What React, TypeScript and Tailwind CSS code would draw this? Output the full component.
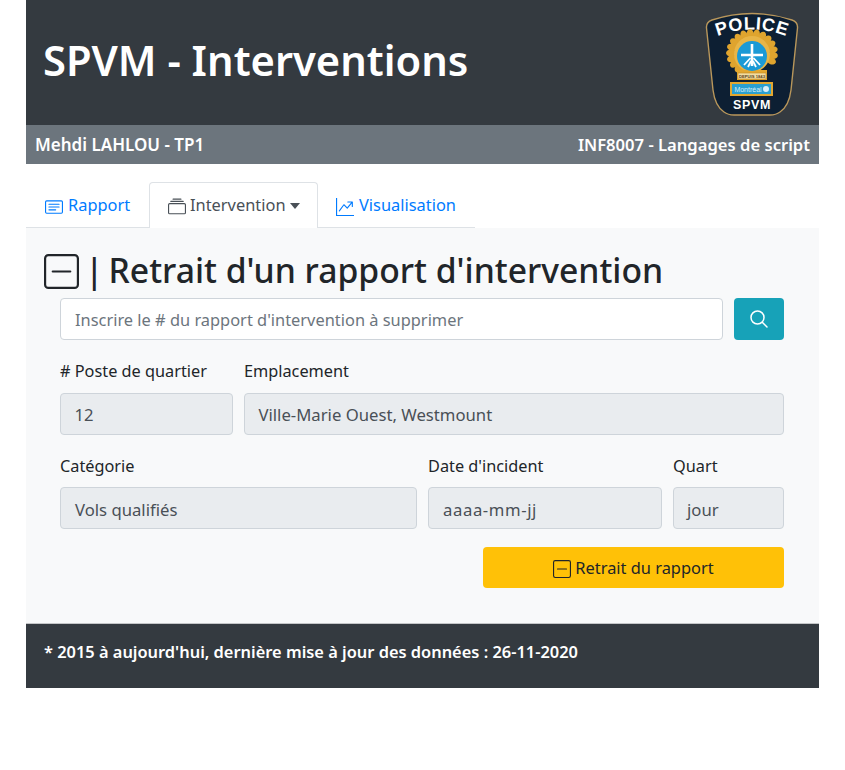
const font = { fontFamily: '"Noto Sans", sans-serif' };
const labelFont = "Liberation Sans, sans-serif";

function Badge() {
  const leaves = Array.from({ length: 17 }, (_, i) => {
    const d = i * 17 + 112;
    const a = (d * Math.PI) / 180;
    return { x: 48 + 21 * Math.cos(a), y: 43 + 19 * Math.sin(a), r: d };
  });
  return (
    <svg width="96" height="106" viewBox="0 0 96 106" className="block">
      <path d="M8 10 Q48 -3 88 10 Q94 12 93.5 18 L87 80 Q85 96 76 102 Q72 105 66 105 L30 105 Q24 105 20 102 Q11 96 9 80 L2.5 18 Q2 12 8 10 Z" fill="#0d1f33" stroke="#b9975b" strokeWidth="1.4" />
      <path id="policeArc" d="M9 28 Q48 11 87 28" fill="none" />
      <text fill="#ffffff" fontSize="18" fontWeight="700" fontFamily={labelFont} letterSpacing="0.6">
        <textPath href="#policeArc" startOffset="50%" textAnchor="middle">POLICE</textPath>
      </text>
      {leaves.map((l, i) => (
        <ellipse key={i} cx={l.x} cy={l.y} rx="5" ry="3.5" fill="#dfa42e" transform={`rotate(${l.r} ${l.x} ${l.y})`} />
      ))}
      <circle cx="48" cy="44" r="18" fill="#e8b547" />
      <rect x="33" y="60" width="30" height="10" fill="#e3a72f" />
      <circle cx="48" cy="46" r="15" fill="#1b9ad6" />
      <path d="M48 34 V56 M37 45 H59" stroke="#ffffff" strokeWidth="2.6" fill="none" />
      <path d="M40 55 L46.5 48 M56 55 L49.5 48 M44 57 L47 51 M52 57 L49 51" stroke="#ffffff" strokeWidth="1.8" fill="none" />
      <rect x="34" y="63" width="28" height="6" fill="#f3dca0" stroke="#c08a25" strokeWidth="0.6" />
      <text x="48" y="67.8" textAnchor="middle" fontSize="4.2" fontWeight="700" fill="#5a4320" fontFamily={labelFont}>DEPUIS 1843</text>
      <rect x="26" y="72" width="43" height="14" fill="#e3a72f" />
      <rect x="28" y="74" width="39" height="10" fill="#2a9fd0" />
      <text x="44" y="82" textAnchor="middle" fontSize="7" fill="#d9f0fa" fontFamily={labelFont}>Montréal</text>
      <circle cx="62" cy="79" r="3" fill="#d9f0fa" />
      <text x="48" y="99" textAnchor="middle" fontSize="12.5" fontWeight="700" fill="#ffffff" fontFamily={labelFont} letterSpacing="0.6">SPVM</text>
    </svg>
  );
}

function MinusSquare({ size, className }: { size: number; className?: string }) {
  return (
    <svg width={size} height={size} viewBox="0 0 16 16" fill="currentColor" className={className}>
      <path fillRule="evenodd" d="M14 1H2a1 1 0 0 0-1 1v12a1 1 0 0 0 1 1h12a1 1 0 0 0 1-1V2a1 1 0 0 0-1-1zM2 0a2 2 0 0 0-2 2v12a2 2 0 0 0 2 2h12a2 2 0 0 0 2-2V2a2 2 0 0 0-2-2H2z" />
      <path fillRule="evenodd" d="M3.5 8a.5.5 0 0 1 .5-.5h8a.5.5 0 0 1 0 1H4a.5.5 0 0 1-.5-.5z" />
    </svg>
  );
}

function ReportIcon() {
  return (
    <svg width="18" height="18" viewBox="0 0 16 16" fill="currentColor" className="mt-[3px]">
      <path fillRule="evenodd" d="M14.5 3h-13a.5.5 0 0 0-.5.5v9a.5.5 0 0 0 .5.5h13a.5.5 0 0 0 .5-.5v-9a.5.5 0 0 0-.5-.5zm-13-1A1.5 1.5 0 0 0 0 3.5v9A1.5 1.5 0 0 0 1.5 14h13a1.5 1.5 0 0 0 1.5-1.5v-9A1.5 1.5 0 0 0 14.5 2h-13z" />
      <path fillRule="evenodd" d="M3 5.5a.5.5 0 0 1 .5-.5h9a.5.5 0 0 1 0 1h-9a.5.5 0 0 1-.5-.5zM3 8a.5.5 0 0 1 .5-.5h9a.5.5 0 0 1 0 1h-9A.5.5 0 0 1 3 8zm0 2.5a.5.5 0 0 1 .5-.5h6a.5.5 0 0 1 0 1h-6a.5.5 0 0 1-.5-.5z" />
    </svg>
  );
}

function StackIcon() {
  return (
    <svg width="18" height="18" viewBox="0 0 16 16" fill="currentColor" className="mt-[3px]">
      <path fillRule="evenodd" d="M14.5 13.5h-13A.5.5 0 0 1 1 13V6a.5.5 0 0 1 .5-.5h13a.5.5 0 0 1 .5.5v7a.5.5 0 0 1-.5.5zm-13 1A1.5 1.5 0 0 1 0 13V6a1.5 1.5 0 0 1 1.5-1.5h13A1.5 1.5 0 0 1 16 6v7a1.5 1.5 0 0 1-1.5 1.5h-13zM2 3a.5.5 0 0 0 .5.5h11a.5.5 0 0 0 0-1h-11A.5.5 0 0 0 2 3zm2-2a.5.5 0 0 0 .5.5h7a.5.5 0 0 0 0-1h-7A.5.5 0 0 0 4 1z" />
    </svg>
  );
}

function GraphIcon() {
  return (
    <svg width="18" height="18" viewBox="0 0 16 16" fill="currentColor" className="mt-[3px]">
      <path d="M0 0h1v15h15v1H0V0z" />
      <path fillRule="evenodd" d="M10 3.5a.5.5 0 0 1 .5-.5h4a.5.5 0 0 1 .5.5v4a.5.5 0 0 1-1 0V4.9l-3.613 4.417a.5.5 0 0 1-.74.037L7.06 6.767l-3.656 5.027a.5.5 0 0 1-.808-.588l4-5.5a.5.5 0 0 1 .758-.06l2.609 2.61L13.445 4H10.5a.5.5 0 0 1-.5-.5z" />
    </svg>
  );
}

function Field({ label, value, className, labelClass = "mb-[10px]", valueClass = "pt-[1px] px-[13.5px]" }: { label: string; value: string; className: string; labelClass?: string; valueClass?: string }) {
  return (
    <div className={className}>
      <div className={`h-[24px] text-[16.3px] leading-[24px] text-[#212529] whitespace-nowrap ${labelClass}`}>{label}</div>
      <div className={`h-[42px] flex items-center bg-[#e9ecef] border border-[#ced4da] rounded-[4px] text-[16.7px] text-[#495057] whitespace-nowrap ${valueClass}`}>{value}</div>
    </div>
  );
}

export default function App() {
  return (
    <div className="w-[793px] mx-auto" style={font}>
      <header className="h-[125px] bg-[#343a40] flex items-center justify-between pl-[17px] pr-[19px]">
        <h1 className="text-[41.7px] font-semibold text-white leading-none pb-[5px]">SPVM - Interventions</h1>
        <Badge />
      </header>
      <div className="h-[39px] pt-[1px] bg-[#6c757d] flex items-center justify-between px-[9px] font-semibold text-white">
        <span className="text-[17px]">Mehdi LAHLOU - TP1</span>
        <span className="text-[16.6px]">INF8007 - Langages de script</span>
      </div>
      <nav className="h-[64px] flex items-end">
        <div className="flex h-[46px] w-[449px] border-b border-[#dee2e6] text-[16.4px] leading-none">
          <a className="w-[123px] flex items-center gap-[5px] pl-[19px] pt-[2px] text-[#007bff]">
            <ReportIcon />
            Rapport
          </a>
          <a className="w-[169px] h-[46px] flex items-center gap-[4px] pl-[18px] text-[#495057] bg-white border border-b-0 border-[#dee2e6] rounded-t-[4px]">
            <StackIcon />
            Intervention
            <span className="border-x-[5px] border-x-transparent border-t-[6px] border-t-[#495057]" />
          </a>
          <a className="flex items-center gap-[5px] pl-[18px] pt-[2px] text-[#007bff]">
            <GraphIcon />
            Visualisation
          </a>
        </div>
      </nav>
      <main className="h-[395px] bg-[#f8f9fa] pt-[22px] pl-[18px] pr-[35px]">
        <h2 className="flex items-center gap-[6px] h-[42px] text-[33.7px] font-medium text-[#212529] leading-none whitespace-nowrap">
          <MinusSquare size={35} />
          <span>|</span>
          <span className="-ml-[1px]">Retrait d'un rapport d'intervention</span>
        </h2>
        <div className="pl-[16px] mt-[6px]">
          <div className="flex justify-between">
            <div className="w-[663px] h-[42px] flex items-center px-[14px] pt-[2px] bg-white border border-[#ced4da] rounded-[4px] text-[16.4px] text-[#6c757d] whitespace-nowrap">
              Inscrire le # du rapport d'intervention à supprimer
            </div>
            <button className="w-[50px] h-[42px] flex items-center justify-center bg-[#17a2b8] rounded-[4px] text-white">
              <svg width="20" height="20" viewBox="0 0 20 20" fill="none" stroke="currentColor" strokeWidth="1.5" strokeLinecap="round">
                <circle cx="8.5" cy="8.5" r="6.5" />
                <path d="M13.5 13.5 L18 18" />
              </svg>
            </button>
          </div>
          <div className="flex gap-[11px] mt-[19px]">
            <Field label="# Poste de quartier" value="12" className="w-[173px]" />
            <Field label="Emplacement" value="Ville-Marie Ouest, Westmount" className="flex-1" />
          </div>
          <div className="flex gap-[11px] mt-[19px]">
            <Field label="Catégorie" value="Vols qualifiés" className="w-[357px]" labelClass="mb-[9px]" valueClass="pt-[3px] px-[14px]" />
            <Field label="Date d'incident" value="aaaa-mm-jj" className="w-[234px]" labelClass="mb-[9px]" valueClass="pt-[3px] px-[14px] tracking-[0.6px]" />
            <Field label="Quart" value="jour" className="flex-1" labelClass="mb-[9px]" valueClass="pt-[3px] px-[13px]" />
          </div>
          <div className="flex justify-end mt-[18px]">
            <button className="w-[301px] h-[41px] flex items-center justify-center gap-[4px] pt-[1px] bg-[#ffc107] rounded-[4px] text-[16.4px] text-[#212529]">
              <MinusSquare size={18} className="mt-[2px]" />
              Retrait du rapport
            </button>
          </div>
        </div>
      </main>
      <footer className="h-[65px] bg-[#343a40] border-t border-[#c4c6c8] flex items-center pl-[18px] pb-[7px] text-[16.4px] font-semibold text-white">
        * 2015 à aujourd'hui, dernière mise à jour des données : 26-11-2020
      </footer>
    </div>
  );
}
